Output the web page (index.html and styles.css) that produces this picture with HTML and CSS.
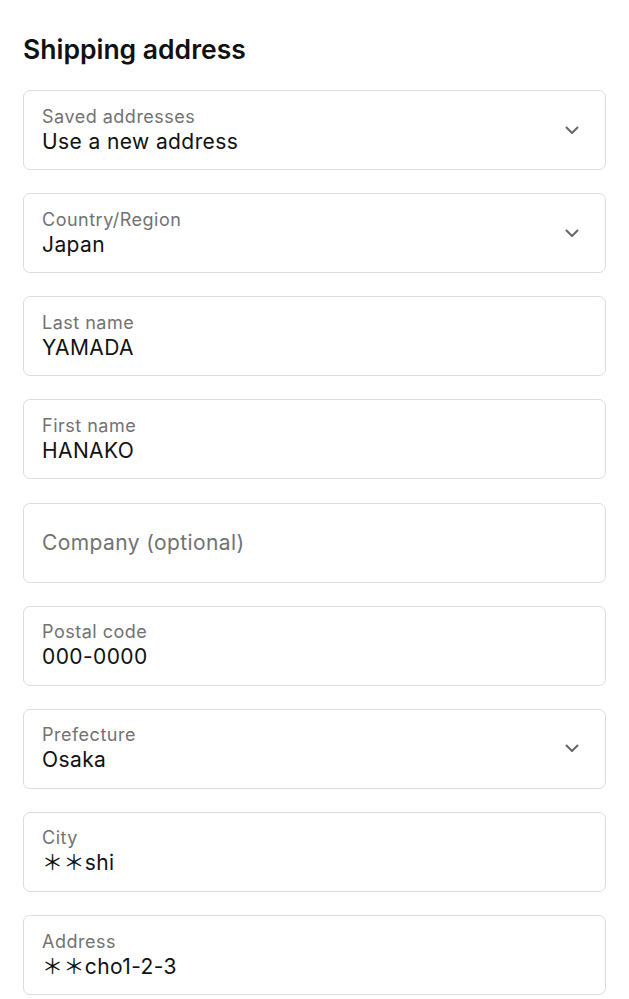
FILE: index.html
```html
<!DOCTYPE html>
<html lang="en">
<head>
  <meta charset="UTF-8">
  <meta name="viewport" content="width=device-width, initial-scale=1.0">
  <title>Shipping address</title>
  <link rel="stylesheet" href="styles.css">
</head>
<body>

  <div class="checkout">
    <h2 class="title">Shipping address</h2>

    <div class="field select">
      <div class="field-text">
        <span class="label">Saved addresses</span>
        <span class="value">Use a new address</span>
      </div>
      <svg class="chevron" viewBox="0 0 14 9"><path d="M1.5 1.5 L7 7 L12.5 1.5"/></svg>
    </div>

    <div class="field select">
      <div class="field-text">
        <span class="label">Country/Region</span>
        <span class="value">Japan</span>
      </div>
      <svg class="chevron" viewBox="0 0 14 9"><path d="M1.5 1.5 L7 7 L12.5 1.5"/></svg>
    </div>

    <div class="field">
      <div class="field-text">
        <span class="label">Last name</span>
        <span class="value">YAMADA</span>
      </div>
    </div>

    <div class="field">
      <div class="field-text">
        <span class="label">First name</span>
        <span class="value">HANAKO</span>
      </div>
    </div>

    <div class="field empty">
      <div class="field-text">
        <span class="placeholder">Company (optional)</span>
      </div>
    </div>

    <div class="field">
      <div class="field-text">
        <span class="label">Postal code</span>
        <span class="value">000-0000</span>
      </div>
    </div>

    <div class="field select">
      <div class="field-text">
        <span class="label">Prefecture</span>
        <span class="value">Osaka</span>
      </div>
      <svg class="chevron" viewBox="0 0 14 9"><path d="M1.5 1.5 L7 7 L12.5 1.5"/></svg>
    </div>

    <div class="field">
      <div class="field-text">
        <span class="label">City</span>
        <span class="value">＊＊shi</span>
      </div>
    </div>

    <div class="field">
      <div class="field-text">
        <span class="label">Address</span>
        <span class="value">＊＊cho1-2-3</span>
      </div>
    </div>
  </div>

</body>
</html>
```

FILE: styles.css
```css
body {
  margin: 0;
  padding: 0;
  background-color: #ffffff;
  font-family: Inter, "Noto Sans", "Noto Sans CJK JP", sans-serif;
  color: #111111;
}

.checkout {
  padding: 0 23px;
}

.title {
  margin: 0;
  padding: 33px 0 24px;
  font-size: 26.5px;
  line-height: 33px;
  font-weight: 600;
}

.field {
  display: flex;
  align-items: center;
  height: 80px;
  margin-bottom: 23.15px;
  border: 1px solid #dcdcdc;
  border-radius: 7px;
  box-sizing: border-box;
  padding: 0 26px 0 18px;
}

.field-text {
  flex: 1;
  display: flex;
  flex-direction: column;
}

.label {
  font-size: 18px;
  line-height: 22px;
  letter-spacing: 0.5px;
  color: #727272;
}

.value {
  font-size: 21px;
  line-height: 27px;
  letter-spacing: 0.4px;
  color: #111111;
}

.placeholder {
  font-size: 21px;
  line-height: 27px;
  letter-spacing: 0.4px;
  color: #727272;
}

.chevron {
  width: 14px;
  height: 9px;
  fill: none;
  stroke: #666666;
  stroke-width: 2;
  stroke-linecap: round;
  stroke-linejoin: round;
}
```
